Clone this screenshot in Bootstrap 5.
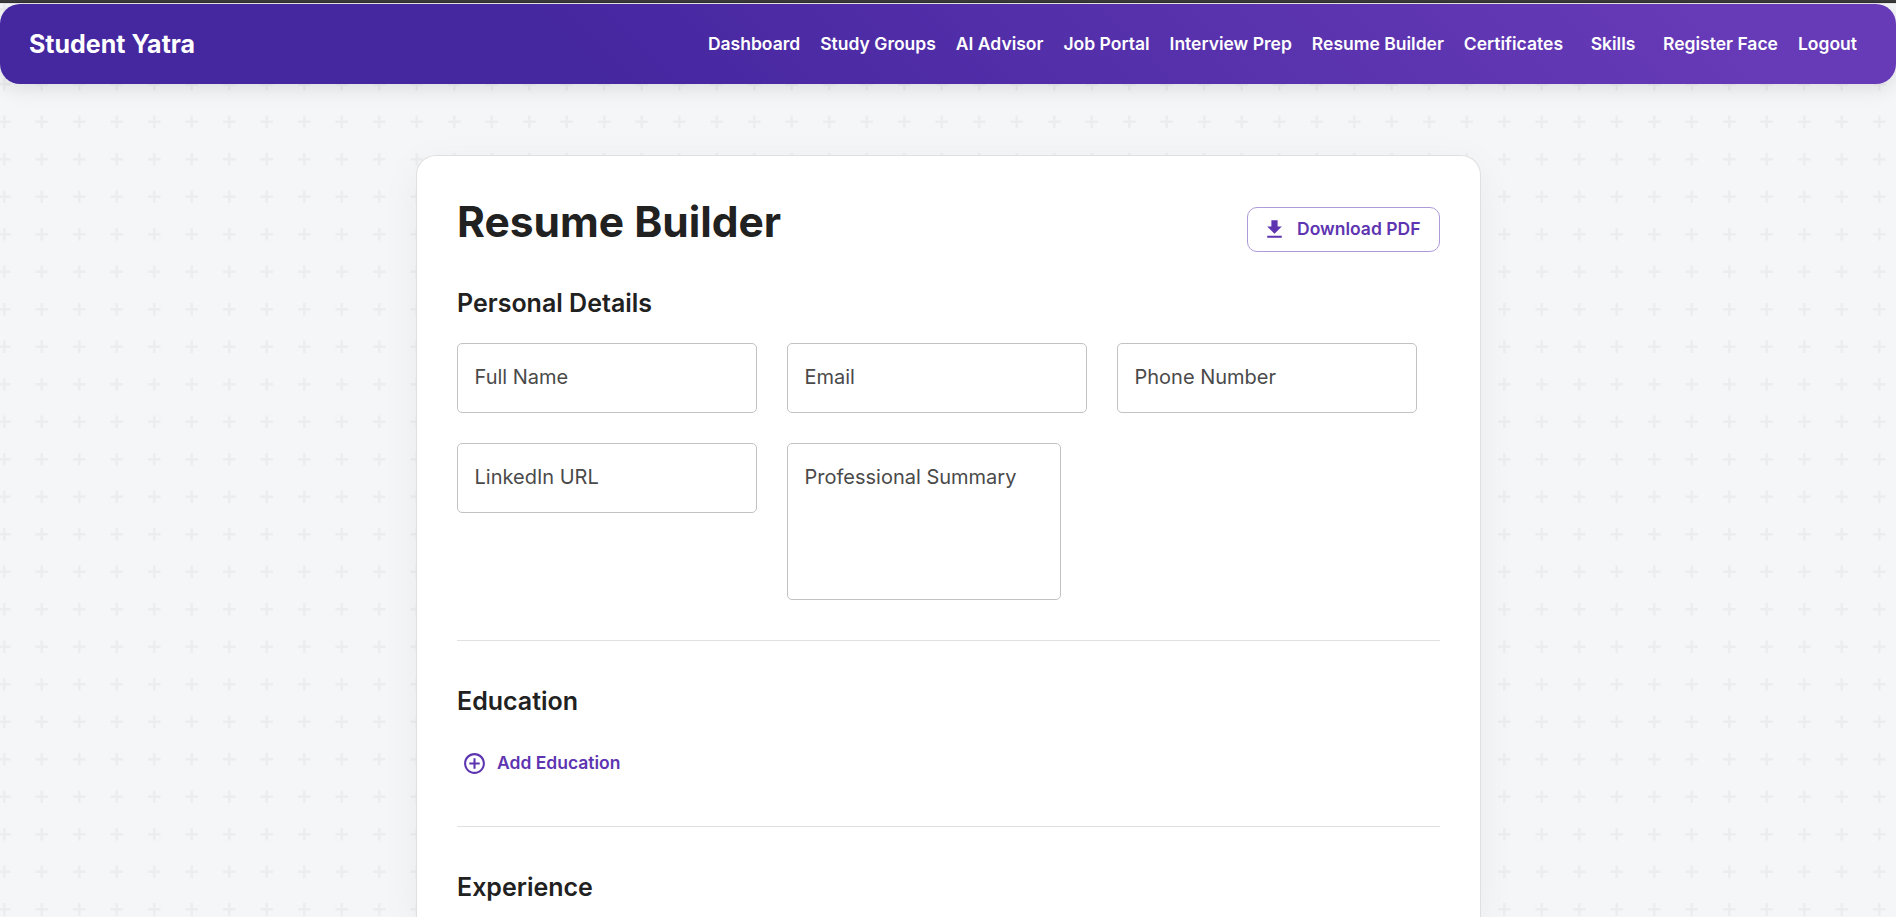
<!DOCTYPE html>
<html lang="en">
<head>
<meta charset="utf-8">
<meta name="viewport" content="width=device-width, initial-scale=1">
<title>Resume Builder</title>
<link href="https://cdn.jsdelivr.net/npm/bootstrap@5.3.0/dist/css/bootstrap.min.css" rel="stylesheet">
<style>
body{font-family:Inter,sans-serif;color:#212121;background:#f4f6f8 url("data:image/svg+xml,%3Csvg xmlns='http://www.w3.org/2000/svg' width='60' height='60' viewBox='0 0 60 60'%3E%3Cpath fill='%23000' fill-opacity='.035' d='M36 34v-4h-2v4h-4v2h4v4h2v-4h4v-2h-4zm0-30V0h-2v4h-4v2h4v4h2V6h4V4h-4zM6 34v-4H4v4H0v2h4v4h2v-4h4v-2H6zM6 4V0H4v4H0v2h4v4h2V6h4V4H6z'/%3E%3C/svg%3E") -2px 3px/75px 75px}
.top-edge{flex:none;height:4px;background:linear-gradient(#3b3b3b 2px,#2f2f31 2px 3px,#e8e8ea 3px)}
.app-bar{flex:none;height:80px;padding:0 29px;border-radius:20px;background:linear-gradient(45deg,#4527a0 30%,#673ab7 90%);box-shadow:0 5px 20px rgba(0,0,0,.1)}
.app-bar .navbar-brand{font-size:25px;font-weight:700;line-height:1;padding:0;margin:0}
.app-bar .navbar-nav .nav-link{font-size:17.5px;font-weight:600;line-height:30px;padding:0 10px;color:#fff;text-align:center;white-space:nowrap}
.app-bar .navbar-nav .nav-wide{min-width:80px}
.sheet-area{padding:71px 0 0 1px;overflow:hidden}
.sheet{width:1065px;padding:40px 40px 0;border:1px solid #e0e0e0;border-bottom:0;border-radius:20px 20px 0 0;box-shadow:0 10px 40px rgba(0,0,0,.05)}
h1{font-size:42.5px;font-weight:700;line-height:52.5px;margin:0}
h2{font-size:25px;font-weight:600;line-height:40px;margin:40px 0 0}
.btn-purple{font-size:17.5px;font-weight:600;line-height:30px;color:#5e35b1;border-radius:10px}
.btn-purple svg{flex:none;margin-right:10px}
.btn-download{width:193px;height:45px;padding:0 18px;border-color:#ae9ad8;margin-top:11px}
.btn-download svg{margin-left:-4px}
.btn-download span{padding-bottom:2px}
.btn-add{padding:7px 5px;margin-top:20px}
.title-personal{margin-top:31px}
.fields{gap:30px;margin-top:20px}
.fields .form-control{width:300px;height:70px;padding:0 16.5px 2px;font-size:20px;border:1px solid #c2c2c2;border-radius:5px;background:#fff;color:#212121}
.fields .form-control::placeholder{color:#4a4a4a;opacity:1}
.fields textarea.form-control{width:274px;height:157px;padding:18px 16.5px;resize:none}
.rule{height:1px;background:#e0e0e0;margin-top:40px}
.rule-add{margin-top:41px}
</style>
</head>
<body class="d-flex flex-column vh-100 overflow-hidden">
<div class="top-edge"></div>
<nav class="app-bar navbar navbar-expand navbar-dark d-flex justify-content-between align-items-center">
  <a class="navbar-brand" href="#">Student Yatra</a>
  <div class="navbar-nav">
    <a class="nav-link" href="#">Dashboard</a>
    <a class="nav-link" href="#">Study Groups</a>
    <a class="nav-link" href="#">AI Advisor</a>
    <a class="nav-link" href="#">Job Portal</a>
    <a class="nav-link" href="#">Interview Prep</a>
    <a class="nav-link" href="#">Resume Builder</a>
    <a class="nav-link" href="#">Certificates</a>
    <a class="nav-link nav-wide" href="#">Skills</a>
    <a class="nav-link" href="#">Register Face</a>
    <a class="nav-link" href="#">Logout</a>
  </div>
</nav>
<main class="sheet-area flex-grow-1 d-flex justify-content-center">
  <div class="sheet bg-white">
    <div class="d-flex justify-content-between align-items-start">
      <h1>Resume Builder</h1>
      <button class="btn btn-purple btn-download d-flex align-items-center" type="button">
        <svg width="25" height="25" viewBox="0 0 24 24" fill="currentColor"><path d="M5 20h14v-2H5zM19 9h-4V3H9v6H5l7 7z"/></svg><span>Download PDF</span>
      </button>
    </div>
    <h2 class="title-personal">Personal Details</h2>
    <form class="fields d-flex flex-wrap align-items-start">
      <input class="form-control" placeholder="Full Name">
      <input class="form-control" placeholder="Email">
      <input class="form-control" placeholder="Phone Number">
      <input class="form-control" placeholder="LinkedIn URL">
      <textarea class="form-control" placeholder="Professional Summary"></textarea>
    </form>
    <div class="rule"></div>
    <h2>Education</h2>
    <button class="btn btn-purple btn-add d-flex align-items-center border-0" type="button">
      <svg width="25" height="25" viewBox="0 0 24 24" fill="currentColor"><path d="M13 7h-2v4H7v2h4v4h2v-4h4v-2h-4zm-1-5C6.480 2 2 6.480 2 12s4.480 10 10 10 10-4.480 10-10S17.520 2 12 2zm0 18c-4.410 0-8-3.590-8-8s3.590-8 8-8 8 3.590 8 8-3.590 8-8 8z"/></svg><span>Add Education</span>
    </button>
    <div class="rule rule-add"></div>
    <h2>Experience</h2>
  </div>
</main>
<script src="https://cdn.jsdelivr.net/npm/bootstrap@5.3.0/dist/js/bootstrap.bundle.min.js"></script>
</body>
</html>
